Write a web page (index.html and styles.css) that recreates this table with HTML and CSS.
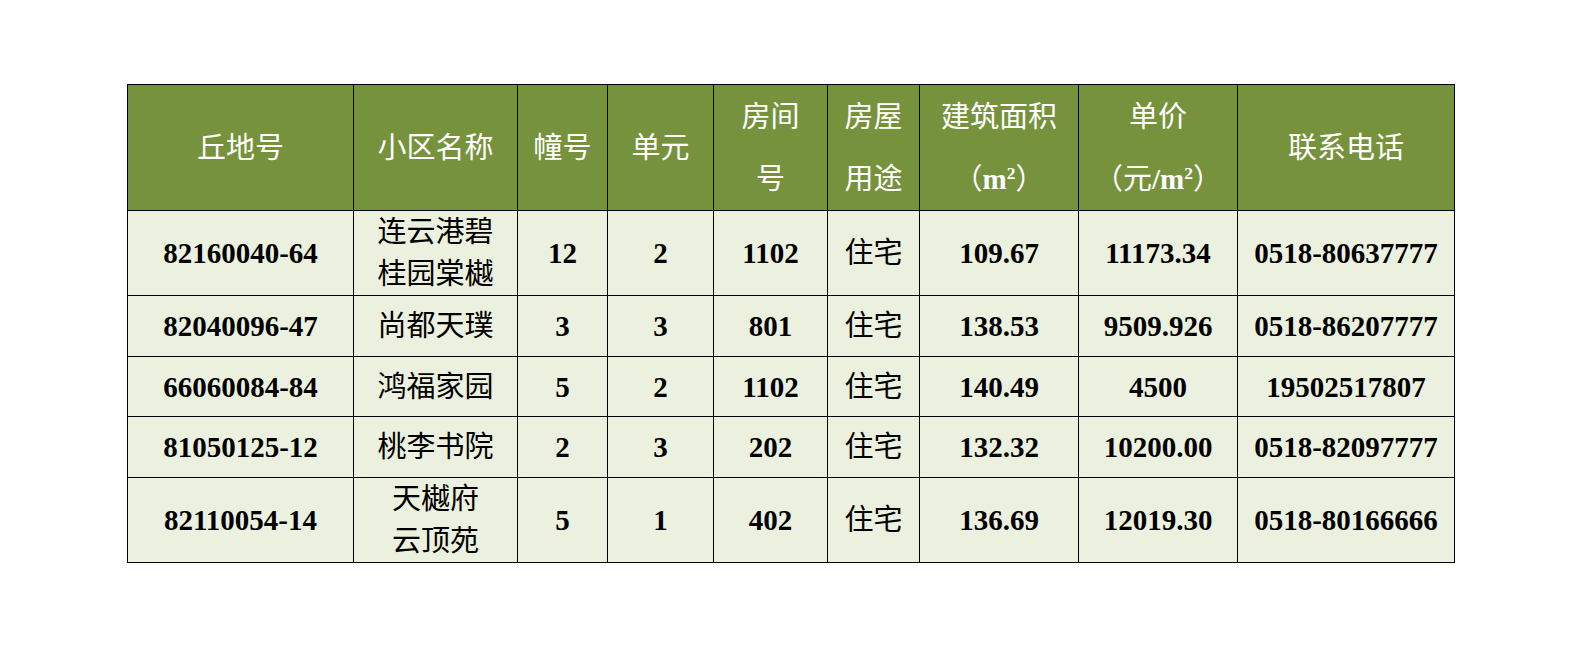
FILE: index.html
```html
<!DOCTYPE html>
<html lang="zh-CN">
<head>
<meta charset="utf-8">
<title>房源信息</title>
<link rel="stylesheet" href="styles.css">
</head>
<body>
<div class="page">
  <table class="listing">
    <colgroup>
      <col class="c1"><col class="c2"><col class="c3"><col class="c4"><col class="c5">
      <col class="c6"><col class="c7"><col class="c8"><col class="c9">
    </colgroup>
    <thead>
      <tr class="head">
        <th>丘地号</th>
        <th>小区名称</th>
        <th>幢号</th>
        <th>单元</th>
        <th>房间<br>号</th>
        <th>房屋<br>用途</th>
        <th>建筑面积<br>（<b>m<sup>2</sup></b>）</th>
        <th>单价<br>（元<b>/m<sup>2</sup></b>）</th>
        <th>联系电话</th>
      </tr>
    </thead>
    <tbody>
      <tr class="tall">
        <td class="num">82160040-64</td>
        <td class="cn">连云港碧<br>桂园棠樾</td>
        <td class="num">12</td>
        <td class="num">2</td>
        <td class="num">1102</td>
        <td class="cn">住宅</td>
        <td class="num">109.67</td>
        <td class="num">11173.34</td>
        <td class="num">0518-80637777</td>
      </tr>
      <tr class="r2">
        <td class="num">82040096-47</td>
        <td class="cn">尚都天璞</td>
        <td class="num">3</td>
        <td class="num">3</td>
        <td class="num">801</td>
        <td class="cn">住宅</td>
        <td class="num">138.53</td>
        <td class="num">9509.926</td>
        <td class="num">0518-86207777</td>
      </tr>
      <tr class="r3">
        <td class="num">66060084-84</td>
        <td class="cn">鸿福家园</td>
        <td class="num">5</td>
        <td class="num">2</td>
        <td class="num">1102</td>
        <td class="cn">住宅</td>
        <td class="num">140.49</td>
        <td class="num">4500</td>
        <td class="num">19502517807</td>
      </tr>
      <tr class="r4">
        <td class="num">81050125-12</td>
        <td class="cn">桃李书院</td>
        <td class="num">2</td>
        <td class="num">3</td>
        <td class="num">202</td>
        <td class="cn">住宅</td>
        <td class="num">132.32</td>
        <td class="num">10200.00</td>
        <td class="num">0518-82097777</td>
      </tr>
      <tr class="tall">
        <td class="num">82110054-14</td>
        <td class="cn">天樾府<br>云顶苑</td>
        <td class="num">5</td>
        <td class="num">1</td>
        <td class="num">402</td>
        <td class="cn">住宅</td>
        <td class="num">136.69</td>
        <td class="num">12019.30</td>
        <td class="num">0518-80166666</td>
      </tr>
    </tbody>
  </table>
</div>
</body>
</html>
```
FILE: styles.css
```css
html, body {
  margin: 0;
  padding: 0;
  background: #ffffff;
}

.page {
  padding: 84px 0 0 127px;
}

.listing {
  border-collapse: collapse;
  table-layout: fixed;
  width: 1327px;
  font-family: "Liberation Serif", "Noto Sans CJK SC", serif;
  font-size: 29px;
  color: #000000;
}

.c1 { width: 226px; }
.c2 { width: 164px; }
.c3 { width: 90px; }
.c4 { width: 106px; }
.c5 { width: 114px; }
.c6 { width: 92px; }
.c7 { width: 159px; }
.c8 { width: 159px; }
.c9 { width: 217px; }

.listing th,
.listing td {
  border: 1px solid #000000;
  padding: 0;
  text-align: center;
  vertical-align: middle;
}

.listing th {
  background: #76923c;
  color: #ffffff;
  font-weight: normal;
  line-height: 62px;
}

.listing th b {
  font-weight: bold;
}

.listing sup {
  font-size: 0.6em;
  line-height: 0;
  vertical-align: 0.6em;
}

.listing td {
  background: #ebf1de;
  line-height: 42px;
}

.head { height: 126px; }
.tall { height: 85px; }
.r2 { height: 61px; }
.r3 { height: 60px; }
.r4 { height: 61px; }

.num {
  font-weight: bold;
}

.cn {
  font-weight: normal;
}
```
